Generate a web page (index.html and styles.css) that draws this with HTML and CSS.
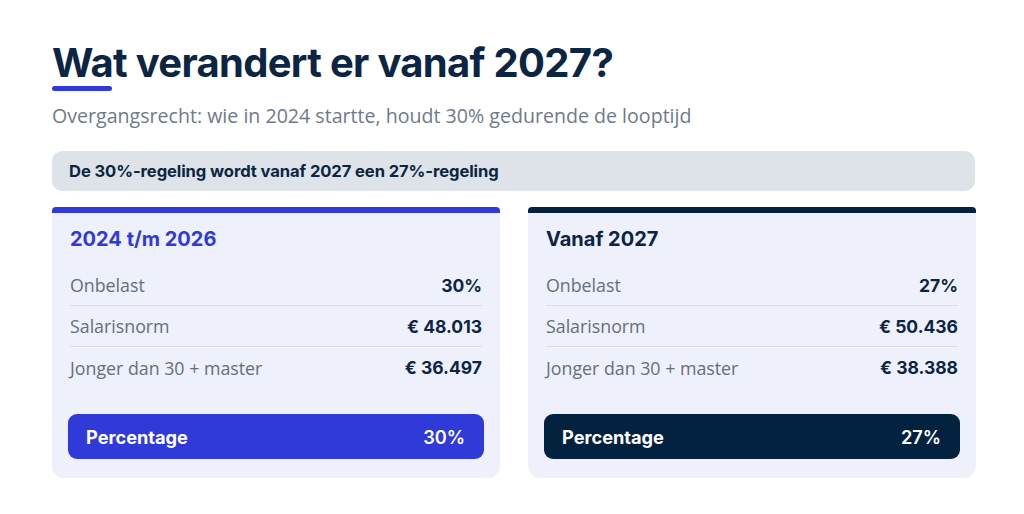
FILE: index.html
```html
<!DOCTYPE html>
<html lang="nl">
<head>
<meta charset="utf-8">
<title>Wat verandert er vanaf 2027?</title>
<link rel="stylesheet" href="styles.css">
</head>
<body>
<main class="page">
  <h1 class="title">Wat verandert er vanaf 2027?</h1>
  <div class="title-bar"></div>
  <p class="subtitle">Overgangsrecht: wie in 2024 startte, houdt 30% gedurende de looptijd</p>
  <div class="banner">De 30%-regeling wordt vanaf 2027 een 27%-regeling</div>
  <div class="cards">
    <section class="card card-blue">
      <h2 class="card-title">2024 t/m 2026</h2>
      <div class="rows">
        <div class="row"><span class="label">Onbelast</span><span class="value">30%</span></div>
        <div class="row"><span class="label">Salarisnorm</span><span class="value">€ 48.013</span></div>
        <div class="row"><span class="label">Jonger dan 30 + master</span><span class="value">€ 36.497</span></div>
      </div>
      <div class="pct"><span>Percentage</span><span class="pct-val">30%</span></div>
    </section>
    <section class="card card-navy">
      <h2 class="card-title">Vanaf 2027</h2>
      <div class="rows">
        <div class="row"><span class="label">Onbelast</span><span class="value">27%</span></div>
        <div class="row"><span class="label">Salarisnorm</span><span class="value">€ 50.436</span></div>
        <div class="row"><span class="label">Jonger dan 30 + master</span><span class="value">€ 38.388</span></div>
      </div>
      <div class="pct"><span>Percentage</span><span class="pct-val">27%</span></div>
    </section>
  </div>
</main>
</body>
</html>
```

FILE: styles.css
```css
* { box-sizing: border-box; }
html, body { margin: 0; padding: 0; background: #ffffff; }
body { width: 1024px; height: 514px; overflow: hidden; font-family: Inter, "Liberation Sans", sans-serif; color: #0c2543; }

.page { padding: 39px 49px 0 52px; }

.title {
  margin: 0;
  font-family: Inter, sans-serif;
  font-weight: 700;
  font-size: 40px;
  line-height: 48px;
  height: 48px;
  letter-spacing: -0.7px;
  color: #0c2543;
}
.title-bar {
  width: 60px; height: 5px; border-radius: 3px;
  background: #2f3ad9;
  margin-top: -1px;
}
.subtitle {
  margin: 13px 0 0 0;
  font-family: "Open Sans", sans-serif;
  font-weight: 400;
  font-size: 19.6px;
  line-height: 24px;
  height: 24px;
  color: #6f7a8a;
}
.banner {
  margin-top: 23px;
  height: 40px;
  background: #dde3e8;
  border-radius: 10px;
  padding: 0 17px;
  display: flex; align-items: center;
  font-family: Inter, sans-serif;
  font-weight: 700;
  font-size: 16.6px;
  letter-spacing: -0.1px;
  color: #0c2543;
}
.cards {
  margin-top: 16px;
  display: grid;
  grid-template-columns: 448px 448px;
  column-gap: 28px;
}
.card {
  background: #eef0fb;
  border-top: 6px solid #2f3ad9;
  border-radius: 4px 4px 12px 12px;
  height: 271px;
  padding: 14px 16px 0 16px;
}
.card-navy { border-top-color: #03223f; }
.card-title {
  margin: 0 2px;
  font-family: Inter, sans-serif;
  font-weight: 700;
  font-size: 20px;
  line-height: 24px;
  color: #2f3ad9;
}
.card-navy .card-title { color: #0c2543; }
.rows { margin: 14px 2px 0 2px; }
.row {
  display: flex; justify-content: space-between; align-items: center;
  height: 41px;
  border-bottom: 1px solid #d8dcea;
}
.row:last-child { border-bottom: none; }
.label {
  font-family: "Open Sans", sans-serif;
  font-size: 17.8px;
  color: #646f7e;
}
.value {
  font-family: Inter, sans-serif;
  font-weight: 700;
  font-size: 17.5px;
  color: #0c2543;
}
.pct {
  margin-top: 26px;
  height: 45px;
  border-radius: 9px;
  background: #2f3ad9;
  color: #ffffff;
  display: flex; justify-content: space-between; align-items: center;
  padding: 0 19px 0 18px;
  font-family: Inter, sans-serif;
  font-weight: 700;
  font-size: 18.2px;
}
.card-navy .pct { background: #03223f; }
.pct-val { font-weight: 600; }
```
